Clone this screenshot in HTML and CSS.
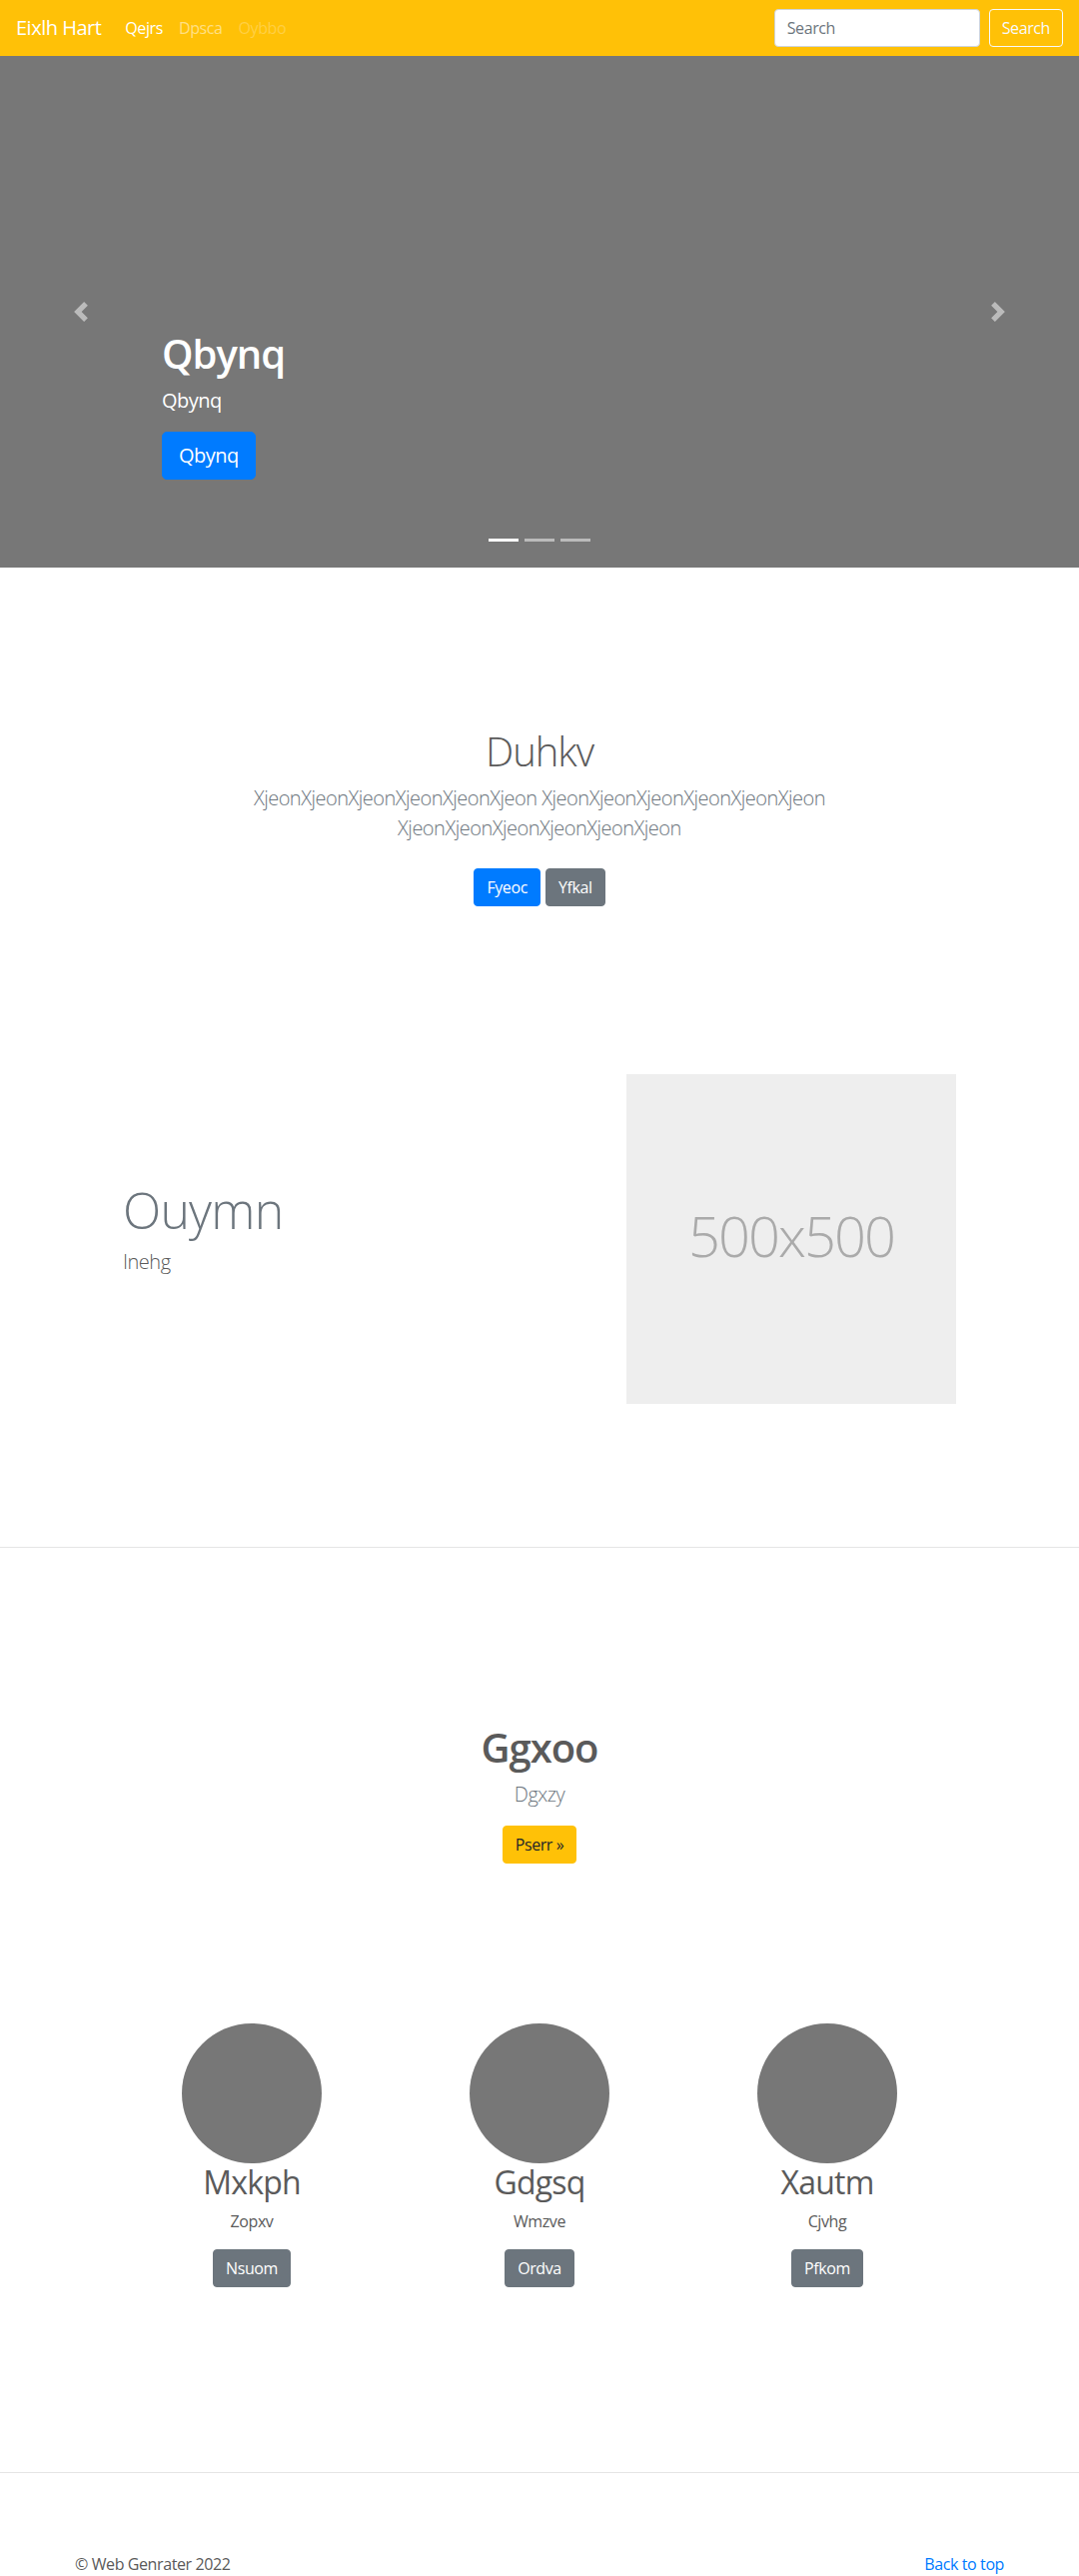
FILE: index.html
```html
<!DOCTYPE html>
<html lang="en">
<head>
<meta charset="utf-8">
<title>Eixlh Hart</title>
<link rel="stylesheet" href="styles.css">
</head>
<body>
<header class="navbar">
  <a class="brand" href="#">Eixlh Hart</a>
  <nav class="nav">
    <a class="nav-link active" href="#">Qejrs</a>
    <a class="nav-link" href="#">Dpsca</a>
    <a class="nav-link disabled" href="#">Oybbo</a>
  </nav>
  <form class="search">
    <input class="search-input" type="text" placeholder="Search">
    <button class="btn btn-outline-light" type="button">Search</button>
  </form>
</header>

<main>
  <div class="carousel">
    <div class="carousel-item">
      <div class="caption">
        <h1 class="caption-title">Qbynq</h1>
        <p class="caption-lead">Qbynq</p>
        <p class="caption-action"><a class="btn btn-lg btn-primary" href="#">Qbynq</a></p>
      </div>
    </div>
    <ol class="indicators">
      <li class="indicator active"></li>
      <li class="indicator"></li>
      <li class="indicator"></li>
    </ol>
    <a class="control control-prev" href="#" aria-label="Previous">
      <svg class="control-icon" viewBox="0 0 8 8" width="20" height="20"><path d="M5.25 0l-4 4 4 4 1.5-1.5L4.25 4l2.5-2.5L5.25 0z"/></svg>
    </a>
    <a class="control control-next" href="#" aria-label="Next">
      <svg class="control-icon" viewBox="0 0 8 8" width="20" height="20"><path d="M2.75 0l-1.5 1.5L3.75 4l-2.5 2.5L2.75 8l4-4-4-4z"/></svg>
    </a>
  </div>

  <section class="intro">
    <h1 class="intro-title">Duhkv</h1>
    <p class="intro-lead">XjeonXjeonXjeonXjeonXjeonXjeon XjeonXjeonXjeonXjeonXjeonXjeon XjeonXjeonXjeonXjeonXjeonXjeon</p>
    <div class="intro-actions">
      <a class="btn btn-primary" href="#">Fyeoc</a>
      <a class="btn btn-secondary" href="#">Yfkal</a>
    </div>
  </section>

  <section class="featurette">
    <div class="featurette-text">
      <h2 class="featurette-heading">Ouymn</h2>
      <p class="featurette-lead">Inehg</p>
    </div>
    <div class="placeholder">500x500</div>
  </section>

  <hr class="divider divider-mid">

  <section class="marketing-head">
    <h1 class="marketing-title">Ggxoo</h1>
    <p class="marketing-lead">Dgxzy</p>
    <a class="btn btn-warning" href="#">Pserr &raquo;</a>
  </section>

  <section class="cards">
    <div class="card">
      <div class="avatar"></div>
      <h2 class="card-title">Mxkph</h2>
      <p class="card-text">Zopxv</p>
      <a class="btn btn-secondary" href="#">Nsuom</a>
    </div>
    <div class="card">
      <div class="avatar"></div>
      <h2 class="card-title">Gdgsq</h2>
      <p class="card-text">Wmzve</p>
      <a class="btn btn-secondary" href="#">Ordva</a>
    </div>
    <div class="card">
      <div class="avatar"></div>
      <h2 class="card-title">Xautm</h2>
      <p class="card-text">Cjvhg</p>
      <a class="btn btn-secondary" href="#">Pfkom</a>
    </div>
  </section>

  <hr class="divider divider-foot">
</main>

<footer class="footer">
  <p class="copyright">&copy; Web Genrater 2022</p>
  <p class="to-top"><a href="#">Back to top</a></p>
</footer>
</body>
</html>
```

FILE: styles.css
```css
* { box-sizing: border-box; letter-spacing: -0.025em; }

body {
  margin: 0;
  font-family: "Open Sans", "Noto Sans", "Liberation Sans", sans-serif;
  font-size: 16px;
  line-height: 1.5;
  color: #5a5a5a;
  background: #fff;
}

h1, h2, p { margin: 0; }

a { text-decoration: none; }

/* Buttons */
.btn {
  display: inline-block;
  padding: 6px 12px;
  font-family: inherit;
  font-size: 16px;
  line-height: 24px;
  font-weight: 400;
  border: 1px solid transparent;
  border-radius: 4px;
  text-align: center;
  white-space: nowrap;
}
.btn-lg {
  padding: 8px 16px;
  font-size: 20px;
  line-height: 30px;
  border-radius: 5px;
}
.btn-primary { background: #007bff; border-color: #007bff; color: #fff; }
.btn-secondary { background: #6c757d; border-color: #6c757d; color: #fff; }
.btn-warning { background: #ffc107; border-color: #ffc107; color: #212529; }
.btn-outline-light { background: transparent; border-color: #f8f9fa; color: #f8f9fa; }

/* Navbar */
.navbar {
  display: flex;
  align-items: center;
  height: 56px;
  padding: 0 16px;
  background: #ffc107;
}
.brand {
  font-size: 20px;
  line-height: 30px;
  color: #fff;
  margin-right: 16px;
}
.nav { display: flex; }
.nav-link {
  padding: 8px;
  color: rgba(255, 255, 255, 0.5);
}
.nav-link.active { color: #fff; }
.nav-link.disabled { color: rgba(255, 255, 255, 0.25); }
.search {
  margin: 0 0 0 auto;
  display: flex;
  align-items: center;
}
.search-input {
  width: 206px;
  height: 38px;
  margin-right: 9px;
  padding: 6px 12px;
  font-family: inherit;
  font-size: 16px;
  color: #495057;
  background: #fff;
  border: 1px solid #ced4da;
  border-radius: 4px;
}
.search-input::placeholder { color: #6c757d; }

/* Carousel */
.carousel {
  position: relative;
  height: 512px;
  background: #777;
}
.carousel-item {
  display: flex;
  flex-direction: column;
  justify-content: flex-end;
  height: 100%;
  padding: 0 15% 72px;
}
.caption { color: #fff; }
.caption-title {
  font-size: 40px;
  line-height: 48px;
  font-weight: 600;
  margin-bottom: 8px;
}
.caption-lead {
  font-size: 20px;
  line-height: 30px;
  margin-bottom: 16px;
}
.caption-action { margin-bottom: 16px; }

.indicators {
  position: absolute;
  left: 15%;
  right: 15%;
  bottom: 0;
  margin: 0 0 16px;
  padding: 0;
  list-style: none;
  display: flex;
  justify-content: center;
}
.indicator {
  width: 30px;
  height: 3px;
  margin: 10px 3px;
  background: rgba(255, 255, 255, 0.5);
}
.indicator.active { background: #fff; }

.control {
  position: absolute;
  top: 0;
  bottom: 0;
  width: 15%;
  display: flex;
  align-items: center;
  justify-content: center;
  opacity: 0.5;
}
.control-prev { left: 0; }
.control-next { right: 0; }
.control-icon { fill: #fff; display: block; }

/* Intro */
.intro {
  padding-top: 160px;
  text-align: center;
}
.intro-title {
  font-size: 40px;
  line-height: 48px;
  font-weight: 300;
  color: #5a5a5a;
  margin-bottom: 8px;
}
.intro-lead {
  max-width: 640px;
  margin: 0 auto;
  font-size: 20px;
  line-height: 30px;
  font-weight: 300;
  color: #6c757d;
}
.intro-actions {
  display: flex;
  justify-content: center;
  gap: 5px;
  margin-top: 25px;
}

/* Featurette */
.featurette {
  width: 834px;
  margin: 168px auto 0;
  display: flex;
  align-items: center;
  justify-content: space-between;
}
.featurette-heading {
  font-size: 50px;
  line-height: 50px;
  font-weight: 300;
  letter-spacing: -0.8px;
  color: #6c757d;
  margin-bottom: 12px;
}
.featurette-lead {
  font-size: 20px;
  line-height: 30px;
  font-weight: 300;
  color: #5a5a5a;
  margin-bottom: 16px;
}
.placeholder {
  width: 330px;
  height: 330px;
  padding-bottom: 8px;
  background: #eee;
  color: #aaa;
  font-size: 56px;
  font-weight: 300;
  letter-spacing: -0.035em;
  display: flex;
  align-items: center;
  justify-content: center;
}

/* Dividers */
.divider {
  border: 0;
  border-top: 1px solid rgba(0, 0, 0, 0.1);
  margin: 0;
  height: 0;
}
.divider-mid { margin-top: 143px; }
.divider-foot { margin-top: 185px; }

/* Marketing */
.marketing-head {
  margin-top: 176px;
  text-align: center;
}
.marketing-title {
  font-size: 40px;
  line-height: 48px;
  font-weight: 600;
  color: #5a5a5a;
  margin-bottom: 8px;
}
.marketing-lead {
  font-size: 20px;
  line-height: 30px;
  font-weight: 300;
  color: #6c757d;
  margin-bottom: 16px;
}

.cards {
  width: 864px;
  margin: 160px auto 0;
  display: grid;
  grid-template-columns: repeat(3, 1fr);
}
.card {
  padding: 0 15px;
  display: flex;
  flex-direction: column;
  align-items: center;
  text-align: center;
}
.avatar {
  width: 140px;
  height: 140px;
  border-radius: 50%;
  background: #777;
}
.card-title {
  font-size: 32px;
  line-height: 38.4px;
  font-weight: 400;
  margin-bottom: 8px;
}
.card-text { margin-bottom: 16px; }

/* Footer */
.footer {
  width: 930px;
  margin: 79px auto 0;
  display: flex;
  justify-content: space-between;
}
.footer p { margin-bottom: 16px; }
.to-top a { color: #007bff; }
```
